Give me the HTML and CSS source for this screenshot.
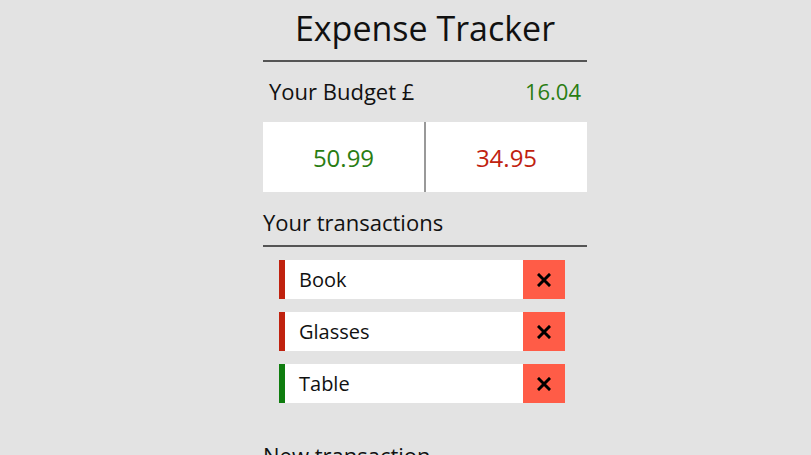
FILE: index.html
```html
<!DOCTYPE html>
<html lang="en">
<head>
<meta charset="utf-8">
<title>Expense Tracker</title>
<link rel="stylesheet" href="styles.css">
</head>
<body>
<main class="app">
  <h1 class="title">Expense Tracker</h1>
  <div class="budget">
    <span class="budget-label">Your Budget £</span>
    <span class="budget-value">16.04</span>
  </div>
  <div class="summary">
    <div class="summary-cell income">50.99</div>
    <div class="summary-cell expense">34.95</div>
  </div>
  <h3 class="section-title bordered">Your transactions</h3>
  <ul class="list">
    <li class="item minus"><span class="item-name">Book</span><button class="delete" aria-label="Delete"><svg class="x-icon" viewBox="0 0 14 14"><path d="M2 2 L12 12 M12 2 L2 12"/></svg></button></li>
    <li class="item minus"><span class="item-name">Glasses</span><button class="delete" aria-label="Delete"><svg class="x-icon" viewBox="0 0 14 14"><path d="M2 2 L12 12 M12 2 L2 12"/></svg></button></li>
    <li class="item plus"><span class="item-name">Table</span><button class="delete" aria-label="Delete"><svg class="x-icon" viewBox="0 0 14 14"><path d="M2 2 L12 12 M12 2 L2 12"/></svg></button></li>
  </ul>
  <h3 class="section-title">New transaction</h3>
</main>
</body>
</html>
```
FILE: styles.css
```css
* { box-sizing: border-box; }
body {
  margin: 0;
  background: #e3e3e3;
  font-family: "Open Sans", "DejaVu Sans", sans-serif;
  color: #111;
  padding-left: 39px;
  overflow: hidden;
}
.app {
  width: 324px;
  margin: 0 auto;
  padding-top: 6px;
}
.title {
  margin: 0;
  font-weight: 400;
  font-size: 34px;
  text-align: center;
  line-height: 44px;
  padding-bottom: 10px;
  border-bottom: 2px solid #555;
}
.budget {
  display: flex;
  justify-content: space-between;
  align-items: baseline;
  padding: 14px 6px 0 6px;
  height: 60px;
  font-size: 22px;
}
.budget-value { color: #2a7d12; }
.summary {
  display: flex;
  background: #fff;
  height: 70px;
}
.summary-cell {
  flex: 1;
  display: flex;
  align-items: center;
  justify-content: center;
  font-size: 24px;
}
.summary-cell.income { color: #2a7d12; border-right: 2px solid #999; }
.summary-cell.expense { color: #c0220f; }
.section-title {
  margin: 0;
  font-weight: 400;
  font-size: 22px;
  padding-top: 16px;
  line-height: 28px;
}
.section-title.bordered {
  padding-bottom: 9px;
  border-bottom: 2px solid #555;
}
.list {
  list-style: none;
  margin: 0;
  padding: 13px 22px 0 16px;
  display: flex;
  flex-direction: column;
  gap: 13px;
}
.item {
  display: flex;
  align-items: center;
  height: 39px;
  background: #fff;
  border-left: 6px solid #c0220f;
}
.item.plus { border-left-color: #0f7d0f; }
.item-name {
  flex: 1;
  padding-left: 14px;
  font-size: 20px;
}
.delete {
  width: 42px;
  height: 39px;
  border: 0;
  background: #ff5c47;
  padding: 0;
  display: flex;
  align-items: center;
  justify-content: center;
}
.x-icon {
  width: 14px;
  height: 14px;
  stroke: #000;
  stroke-width: 3;
  stroke-linecap: square;
  fill: none;
}
.list + .section-title { padding-top: 38px; }
```
